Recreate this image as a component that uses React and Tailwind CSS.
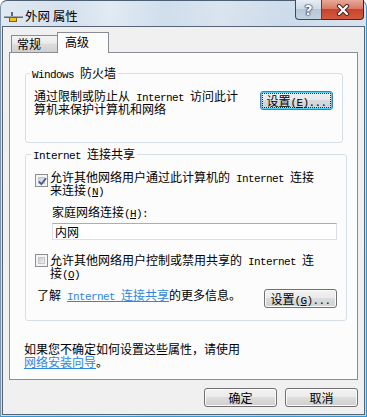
const M = ({ children }) => (
  <span className="font-['Liberation_Mono',monospace] text-[11px] tracking-[-0.6px]">{children}</span>
);

const L = ({ children, className = "" }) => (
  <div className={"h-[13px] whitespace-nowrap " + className}>{children}</div>
);

function Checkbox({ checked, className }) {
  return (
    <div className={"relative w-[13px] h-[13px] shrink-0 border border-[#8f8f8f] bg-[#f4f4f4] p-[2px] " + className}>
      <div className="w-full h-full border border-[#c4c7cc] bg-[linear-gradient(135deg,#c9ccd1,#eff0f1)]" />
      {checked && (
        <svg className="absolute left-[1px] top-[1px]" width="11" height="11" viewBox="0 0 11 11">
          <path d="M2 5.5 L4.3 8.2 L9 2.2" fill="none" stroke="#3c5a9a" strokeWidth="1.8" />
        </svg>
      )}
    </div>
  );
}

function Btn({ children, focused }) {
  if (focused) {
    return (
      <div className="w-[73px] h-[19px] shrink-0 rounded-[3px] border border-[#3c7fb1] bg-[linear-gradient(#eef0f2,#e6e8ea_45%,#d7dadd_50%,#cdd0d4)] shadow-[inset_0_0_0_1px_#4fd0f7] p-[1px] flex">
        <div className="flex-1 border border-dotted border-[#303030] flex items-center justify-center">
          <div className="h-[13px] whitespace-nowrap">{children}</div>
        </div>
      </div>
    );
  }
  return (
    <div className="w-[73px] h-[19px] shrink-0 rounded-[3px] border border-[#707070] bg-[linear-gradient(#f2f2f2,#ebebeb_45%,#dddddd_50%,#cfcfcf)] shadow-[inset_0_0_0_1px_#fbfbfb] flex items-center justify-center">
      <div className="h-[13px] whitespace-nowrap">{children}</div>
    </div>
  );
}

export default function App() {
  return (
    <div className="w-[367px] h-[417px] overflow-hidden bg-white">
      <div className="w-full h-full flex flex-col rounded-t-[7px] border border-t-[#4d5f73] border-l-[#7d93aa] border-r-[#2f9bd6] border-b-[#2f9bd6] bg-[linear-gradient(180deg,rgba(255,255,255,0.3),rgba(255,255,255,0)_70%),linear-gradient(90deg,#d3e0ec_0%,#c3d4e6_18%,#d6e2ee_30%,#bcd0e5_45%,#cbd9e8_60%,#b9cde3_78%,#c9d8e8_100%)] font-['Noto_Sans_CJK_SC',sans-serif] text-[12px] leading-[13px] text-black">
        {/* title bar */}
        <div className="h-[25px] flex items-start justify-between pl-[3px] pr-[2px]">
          <div className="flex items-start mt-[8px]">
            <svg className="mt-[3px]" width="19" height="10" viewBox="0 0 19 10">
              <rect x="7" y="0" width="2" height="5" fill="#5f6b78" />
              <rect x="0" y="4" width="19" height="2" fill="#5f6b78" />
              <rect x="0" y="4" width="19" height="1" fill="#9aa5b1" />
              <rect x="5.5" y="5.5" width="7" height="4" fill="#f0c020" stroke="#8a6000" strokeWidth="1" />
            </svg>
            <span className="ml-[2px] text-[12.5px] leading-[14px]">外网 属性</span>
          </div>
          <div className="-mt-px flex h-[20px]">
            <div className="w-[27px] h-full border border-t-0 border-[#3b4a5c] rounded-bl-[4px] bg-[linear-gradient(#e6edf4,#cfdae6_45%,#b7c7d8_50%,#c4d3e2)] flex items-center justify-center">
              <span className="text-white font-bold text-[14px] leading-[14px] font-['DejaVu_Sans',sans-serif] [text-shadow:0_0_1px_#1a2330,0_0_1px_#1a2330,0_0_2px_#1a2330]">?</span>
            </div>
            <div className="w-[42px] h-full border border-t-0 border-l-0 border-[#3b2a28] rounded-br-[4px] bg-[linear-gradient(#e7a999,#d97a66_45%,#c9432c_50%,#d25a40)] flex items-center justify-center">
              <svg width="16" height="12" viewBox="0 0 16 12">
                <path d="M4 2 L12 10 M12 2 L4 10" stroke="#4a2520" strokeWidth="4.2" strokeLinecap="round" />
                <path d="M4 2 L12 10 M12 2 L4 10" stroke="#ffffff" strokeWidth="2.2" strokeLinecap="round" />
              </svg>
            </div>
          </div>
        </div>

        {/* client */}
        <div className="flex-1 mx-px mb-px border border-[#566474] bg-[#f0f0f0] flex flex-col">
          {/* tabs */}
          <div className="flex items-end pt-[5px] pl-[8px]">
            <div className="w-[46px] h-[17px] border-l border-t border-[#898c95] bg-[linear-gradient(#f3f3f3,#ebebeb_45%,#dddddd_50%,#cfcfcf)] pl-[5px] pt-[1px]">常规</div>
            <div className="relative z-10 w-[52px] h-[21px] -mb-px border border-b-0 border-[#898c95] bg-[#fcfcfc] pl-[7px] pt-[2px]">高级</div>
          </div>

          {/* panel */}
          <div className="mx-[6px] h-[328px] shrink-0 border border-[#898c95] bg-[#fcfcfc] flex flex-col pt-[14px]">
            {/* group 1 */}
            <fieldset className="ml-[15px] mr-[14px] border border-[#d5dfe5] rounded-[3px] px-[4px] pb-[27px]">
              <legend className="px-[2px] h-[12px] leading-[12px] whitespace-nowrap">
                <M>Windows </M>防火墙
              </legend>
              <div className="flex justify-between pt-[10px] pl-[4px] pr-[5px]">
                <div>
                  <L>
                    通过限制或防止从<M> Internet </M>访问此计
                  </L>
                  <L>算机来保护计算机和网络</L>
                </div>
                <div className="mt-[2px]">
                  <Btn focused>
                    设置<M>(<span className="underline">E</span>)...</M>
                  </Btn>
                </div>
              </div>
            </fieldset>

            {/* group 2 */}
            <fieldset className="mt-[5px] ml-[15px] mr-[14px] border border-[#d5dfe5] rounded-[3px] px-[4px] pb-[12px]">
              <legend className="px-[2px] ml-[1px] h-[12px] leading-[12px] whitespace-nowrap">
                <M>Internet </M>连接共享
              </legend>
              <div className="pt-[10px] pl-[5px] pr-[5px] flex flex-col">
                <div className="flex items-start">
                  <Checkbox checked className="mt-[4px]" />
                  <div className="ml-[2px]">
                    <L>
                      允许其他网络用户通过此计算机的<M> Internet </M>连接
                    </L>
                    <L>
                      来连接<M>(<span className="underline">N</span>)</M>
                    </L>
                  </div>
                </div>
                <L className="mt-[9px] pl-[17px]">
                  家庭网络连接<M>(<span className="underline">H</span>):</M>
                </L>
                <div className="mt-[5px] ml-[17px] w-[285px] h-[17px] border border-[#dbdfe6] border-t-[#abadb3] bg-white pl-[2px] flex items-center">
                  <L>内网</L>
                </div>
                <div className="mt-[13px] flex items-start">
                  <Checkbox className="mt-[1px]" />
                  <div className="ml-[2px]">
                    <L>
                      允许其他网络用户控制或禁用共享的<M> Internet </M>连
                    </L>
                    <L>
                      接<M>(<span className="underline">O</span>)</M>
                    </L>
                  </div>
                </div>
                <div className="mt-[9px] flex justify-between items-start">
                  <L className="ml-[2px]">
                    了解<M> </M>
                    <span className="text-[#2e86de] underline underline-offset-[1px]">
                      <M>Internet </M>连接共享
                    </span>
                    的更多信息。
                  </L>
                  <div className="mt-[1px]">
                    <Btn>
                      设置<M>(<span className="underline">G</span>)...</M>
                    </Btn>
                  </div>
                </div>
              </div>
            </fieldset>

            <div className="mt-[21px] ml-[14px]">
              <L>如果您不确定如何设置这些属性，请使用</L>
              <L>
                <span className="text-[#2e86de] underline underline-offset-[1px]">网络安装向导</span>。
              </L>
            </div>
          </div>

          {/* bottom buttons */}
          <div className="mt-[8px] flex justify-end gap-[8px] pr-[6px]">
            <Btn>确定</Btn>
            <Btn>取消</Btn>
          </div>
        </div>
      </div>
    </div>
  );
}
